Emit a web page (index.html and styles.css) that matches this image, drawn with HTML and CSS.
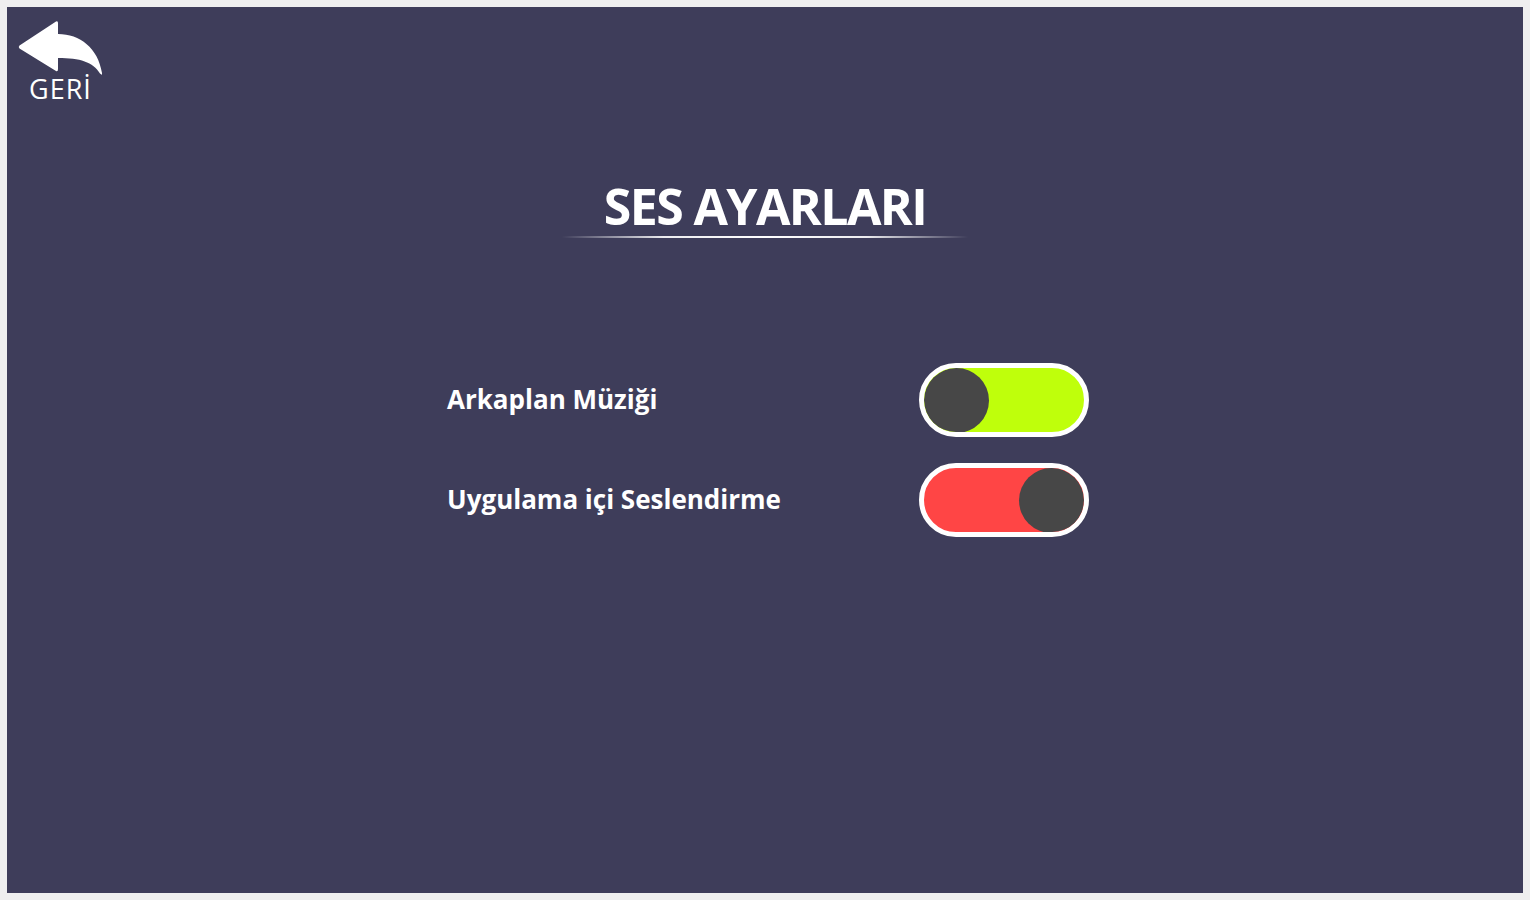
FILE: index.html
```html
<!DOCTYPE html>
<html lang="tr">
<head>
<meta charset="utf-8">
<title>Ses Ayarları</title>
<link rel="stylesheet" href="styles.css">
</head>
<body>
<main class="panel">
  <a class="back" href="#">
    <svg class="back-icon" width="86" height="56" viewBox="0 0 86 56" aria-hidden="true">
      <path d="M1.5,28.5 Q0,27 1.5,25.5 L38,1.5 Q40,0.5 40,3 L40,14 C62,14 80,28 84,53 Q84.5,56 82,53.5 C75,42 62,38 40,38 L40,49 Q40,52 38,51 Z" fill="#fff"/>
    </svg>
    <span class="back-label">GERİ</span>
  </a>

  <header class="title-wrap">
    <h1 class="title">SES AYARLARI</h1>
    <div class="title-line"></div>
  </header>

  <section class="settings">
    <div class="row">
      <span class="label">Arkaplan Müziği</span>
      <div class="toggle toggle-on"><span class="knob"></span></div>
    </div>
    <div class="row">
      <span class="label">Uygulama içi Seslendirme</span>
      <div class="toggle toggle-off"><span class="knob"></span></div>
    </div>
  </section>
</main>
</body>
</html>
```
FILE: styles.css
```css
html, body {
  margin: 0;
  padding: 0;
  height: 100%;
}
body {
  background: #efefef;
  padding: 7px;
  box-sizing: border-box;
  font-family: "Open Sans", "Liberation Sans", sans-serif;
  color: #fff;
}
.panel {
  background: #3e3d5a;
  height: 886px;
  width: 1516px;
  display: flex;
  flex-direction: column;
  position: relative;
}
.back {
  display: flex;
  flex-direction: column;
  align-items: flex-start;
  width: 100px;
  padding: 13px 0 0 11px;
  text-decoration: none;
  color: #fff;
}
.back-icon {
  display: block;
}
.back-label {
  font-size: 27px;
  line-height: 30px;
  margin: -2px 0 0 11px;
  font-weight: 500;
  letter-spacing: 1px;
}
.title-wrap {
  display: flex;
  flex-direction: column;
  align-items: center;
  margin-top: 74px;
}
.title {
  margin: 0;
  font-size: 50px;
  line-height: 56px;
  font-weight: 700;
  letter-spacing: -1.6px;
}
.title-line {
  width: 406px;
  height: 2px;
  margin-top: 2px;
  background: linear-gradient(90deg, rgba(255,255,255,0) 0%, rgba(255,255,255,0.9) 25%, #fff 50%, rgba(255,255,255,0.9) 75%, rgba(255,255,255,0) 100%);
}
.settings {
  width: 642px;
  margin: 125px auto 0;
  padding-left: 6px;
  display: flex;
  flex-direction: column;
  gap: 26px;
}
.row {
  display: flex;
  align-items: center;
  justify-content: space-between;
}
.label {
  font-size: 26px;
  font-weight: 700;
  letter-spacing: 0;
  margin-top: -3px;
}
.toggle {
  width: 160px;
  height: 64px;
  border: 5px solid #fff;
  border-radius: 40px;
  display: flex;
  align-items: center;
  overflow: hidden;
}
.toggle-on {
  background: #bfff0b;
  justify-content: flex-start;
}
.toggle-off {
  background: #ff4545;
  justify-content: flex-end;
}
.knob {
  width: 65px;
  height: 65px;
  border-radius: 50%;
  background: #474747;
  flex: none;
}
```
